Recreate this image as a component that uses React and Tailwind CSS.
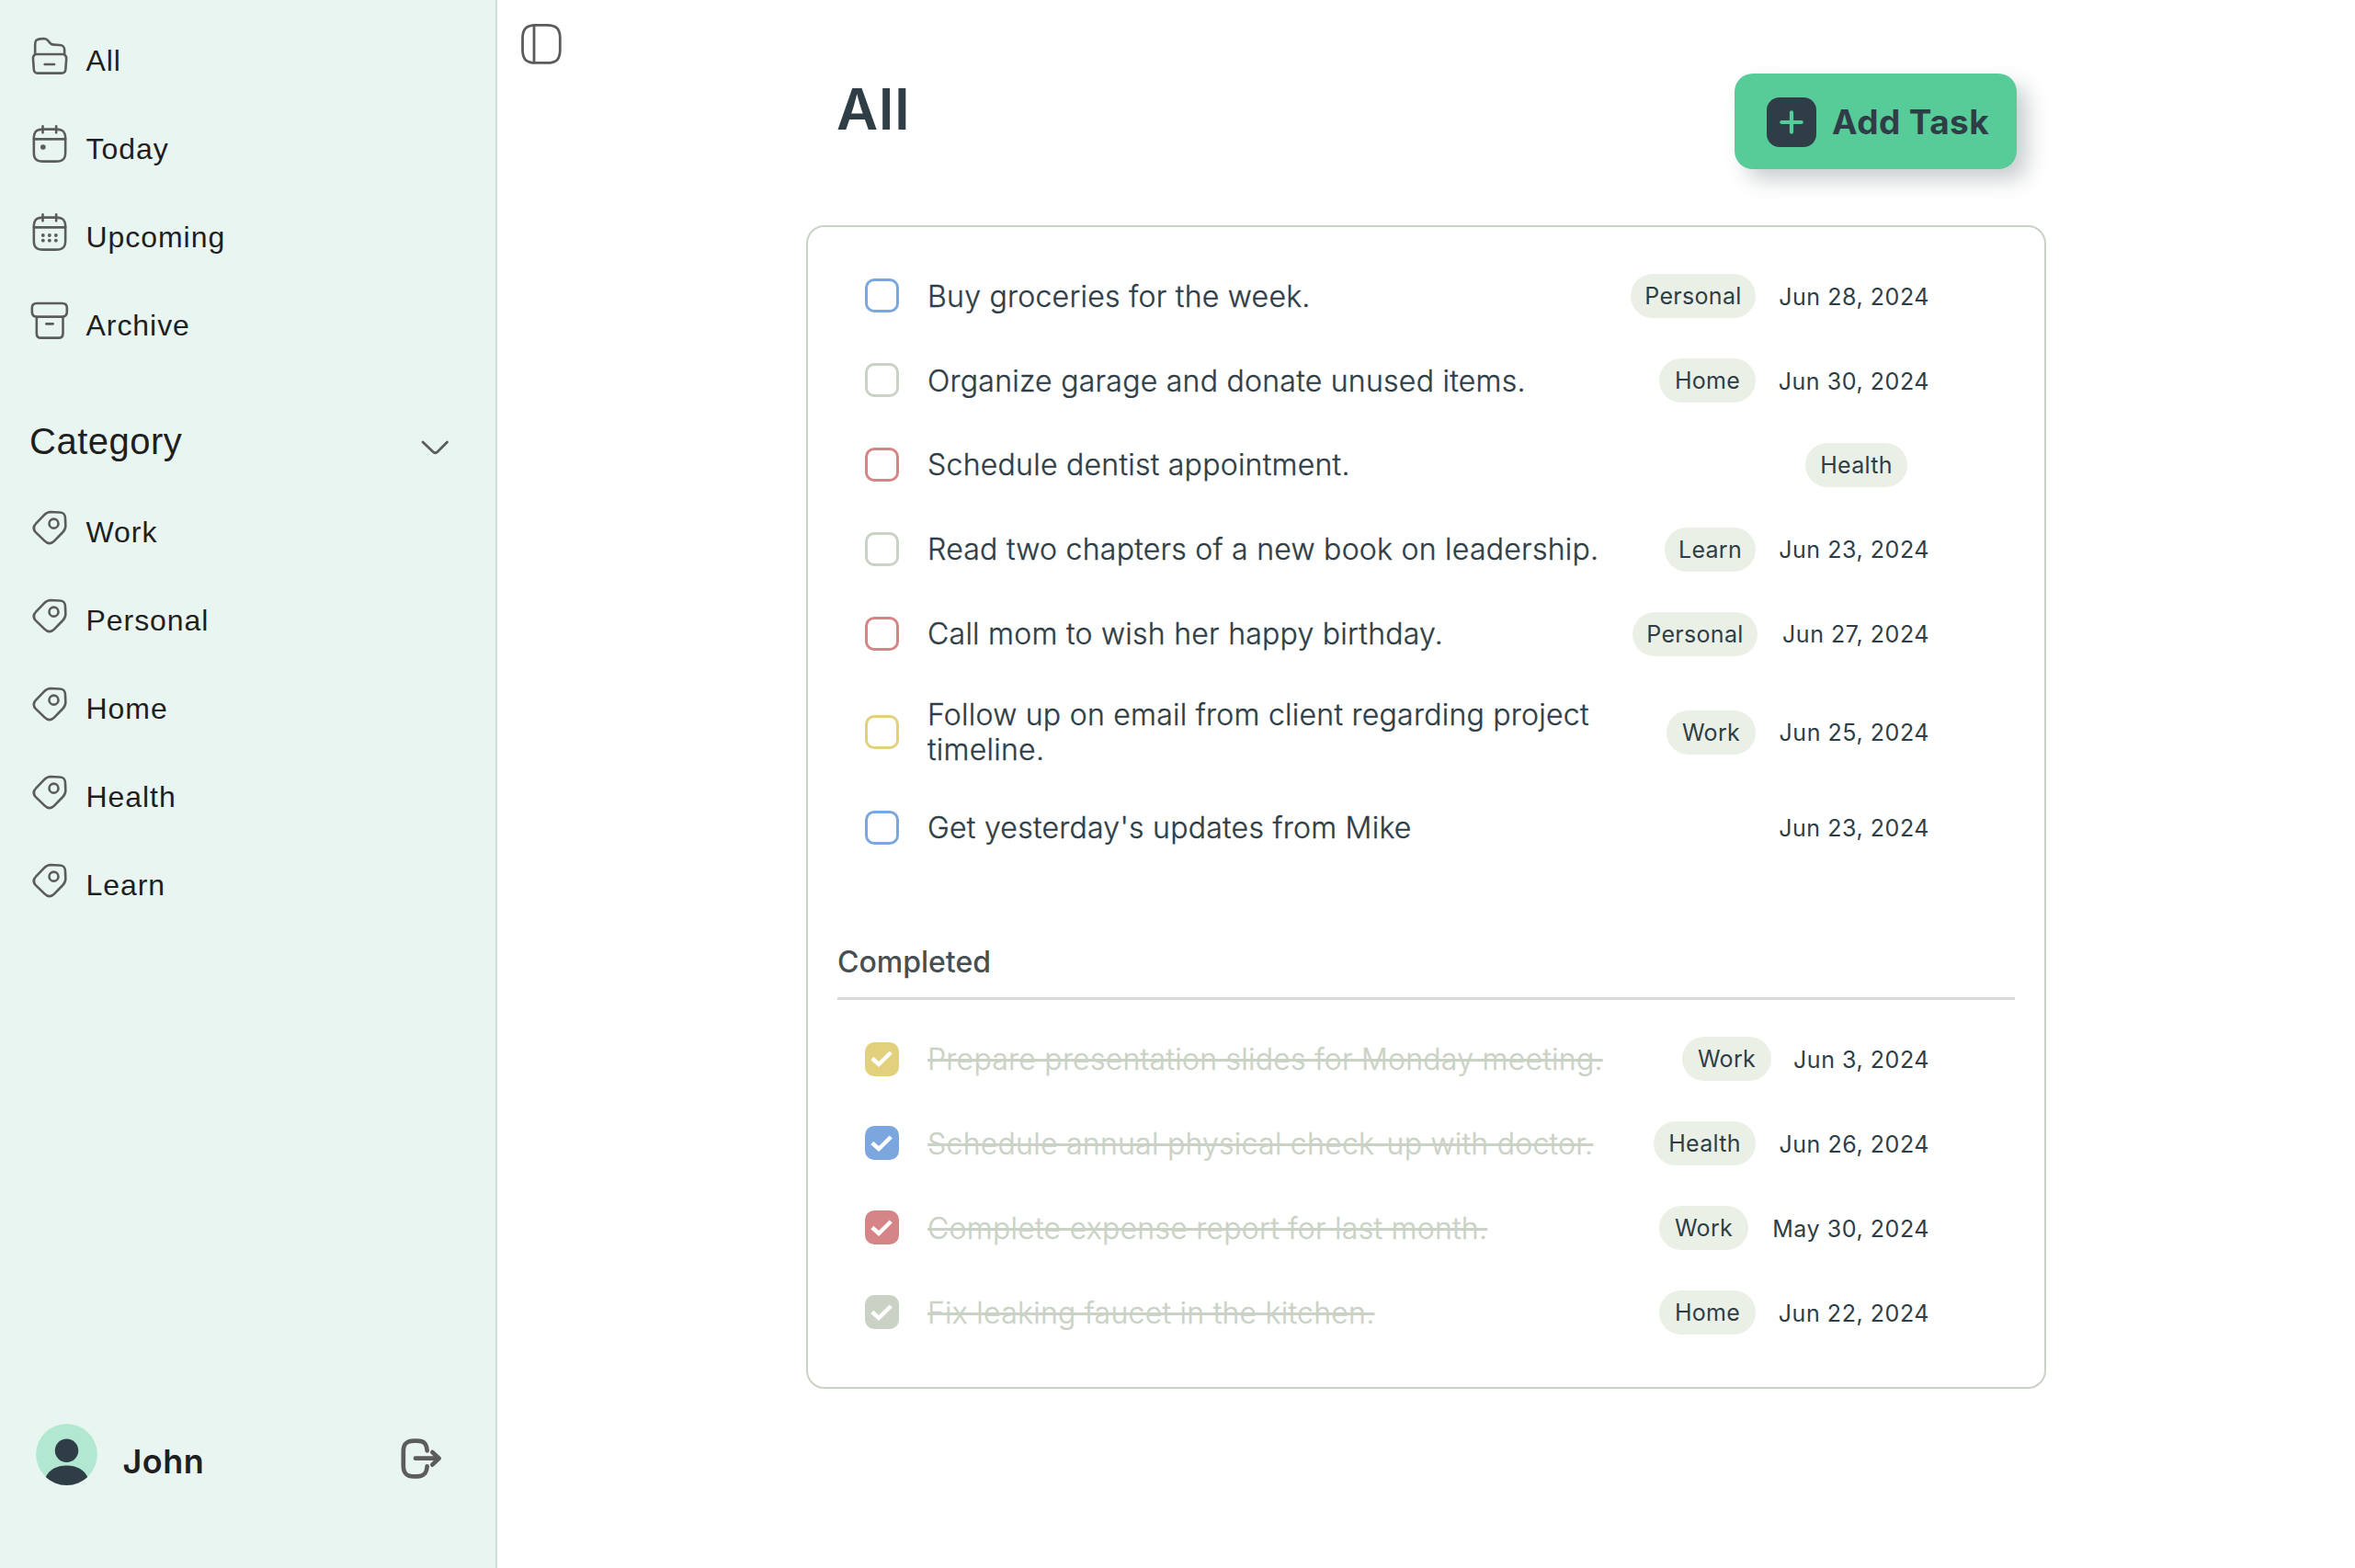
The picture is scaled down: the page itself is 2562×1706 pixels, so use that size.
const iconProps = {
  viewBox: "0 0 144 144",
  fill: "none",
  stroke: "#5c5c5c",
  strokeWidth: 7.8,
  strokeLinecap: "round",
  strokeLinejoin: "round",
};

const FolderIcon = () => (
  <svg {...iconProps} className="size-12 shrink-0">
    <path d="M24.5 66V34C24.5 21 29 17 40 16L54 15C61 15 64 18 68 23L72 28C76 34 79 35 86 35L104 36C116 37 119.5 41 120.5 51V66" />
    <path d="M30 66H114C122 66 127 72 126.500 82L124 116C123 125 119 128 111 128H33C25 128 21.500 125 20.500 116L18 82C17 72 22 66 30 66Z" />
    <path d="M56 99H87" />
  </svg>
);

const CalendarFrame = () => (
  <>
    <path d="M51 23H93C115 23 123.500 31 123.500 53V98C123.500 120 115 128 93 128H51C29 128 20.500 120 20.500 98V53C20.500 31 29 23 51 23Z" />
    <path d="M20.500 55H123.500M49.500 13V34M93.500 13V34" />
  </>
);

const TodayIcon = () => (
  <svg {...iconProps} className="size-12 shrink-0">
    <CalendarFrame />
    <circle cx="50.500" cy="81" r="8.500" fill="#5c5c5c" stroke="none" />
  </svg>
);

const UpcomingIcon = () => (
  <svg {...iconProps} className="size-12 shrink-0">
    <CalendarFrame />
    <g fill="#5c5c5c" stroke="none">
      {[81, 98].map((y) =>
        [50.5, 71.5, 92.5].map((x) => <circle key={`${x}-${y}`} cx={x} cy={y} r="5.8" />)
      )}
    </g>
  </svg>
);

const ArchiveIcon = () => (
  <svg {...iconProps} className="size-12 shrink-0">
    <path d="M30 15H113C124 15 128.500 20 128.500 30V43C128.500 54 124 59 113 59H30C19 59 14.500 54 14.500 43V30C14.500 20 19 15 30 15Z" />
    <path d="M29.500 60V113C29.500 124 34 128 44 128H101C111 128 115.500 124 115.500 113V60" />
    <path d="M61 82H83" />
  </svg>
);

const TagIcon = () => (
  <svg {...iconProps} className="size-12 shrink-0">
    <path d="M75 21L104 22.500C118 23 122.500 28 123 42L124 66C124 76 122 80 115 87L87 116C77 126 66 126 56 116L28 89C18 79 18 68 28 58L54 31C62 23 66 21 75 21Z" />
    <circle cx="85.500" cy="59" r="15" />
  </svg>
);

const LogoutIcon = () => (
  <svg {...iconProps} strokeWidth="14" className="size-12 shrink-0">
    <path d="M92 46C90 23 82 14 60 14H50C24 14 14.500 24 14.500 48V95C14.500 120 24 130 50 130H60C82 130 90 120 92 97" />
    <path d="M54 71H128M109 51L131 71L109 92" />
  </svg>
);

const SidebarIcon = () => (
  <svg viewBox="0 0 48 48" fill="none" stroke="#5c5c5c" strokeWidth="2.8" strokeLinecap="round" className="size-12">
    <path d="M18 3.400H30C40.500 3.400 44.300 7.400 44.300 18V30C44.300 40.600 40.500 44.400 30 44.400H18C7.500 44.400 3.500 40.600 3.500 30V18C3.500 7.400 7.500 3.400 18 3.400Z" />
    <path d="M16 3.600V44.200" />
  </svg>
);

const Avatar = () => (
  <svg viewBox="0 0 200 200" className="size-[67px] shrink-0">
    <clipPath id="avatar-clip">
      <circle cx="100" cy="100" r="100" />
    </clipPath>
    <g clipPath="url(#avatar-clip)">
      <circle cx="100" cy="100" r="100" fill="#b2e7d1" />
      <circle cx="100" cy="87" r="38" fill="#2f3e46" />
      <path d="M32 174C42 150 68 136 100 136S158 150 168 174V200H32Z" fill="#2f3e46" />
    </g>
  </svg>
);

const NavItem = ({ icon: Icon, label }) => (
  <a className="flex h-24 items-center pl-[30px]">
    <Icon />
    <span className="ml-[15.5px] pt-[9px] text-[32px] leading-none tracking-[0.95px]">{label}</span>
  </a>
);

const outline = {
  blue: "border-[#7ba6de]",
  gray: "border-[#cad2c5]",
  red: "border-[#d58585]",
  yellow: "border-[#e2d07c]",
};
const solid = {
  blue: "bg-[#7ba6de]",
  gray: "bg-[#cad2c5]",
  red: "bg-[#d58585]",
  yellow: "bg-[#e2d07c]",
};
const pillWidth = {
  Personal: "w-[136px]",
  Home: "w-[105px]",
  Health: "w-[111px]",
  Learn: "w-[99px]",
  Work: "w-[97px]",
};

const tasks = [
  { color: "blue", text: "Buy groceries for the week.", tag: "Personal", date: "Jun 28, 2024" },
  { color: "gray", text: "Organize garage and donate unused items.", tag: "Home", date: "Jun 30, 2024" },
  { color: "red", text: "Schedule dentist appointment.", tag: "Health" },
  { color: "gray", text: "Read two chapters of a new book on leadership.", tag: "Learn", date: "Jun 23, 2024" },
  { color: "red", text: "Call mom to wish her happy birthday.", tag: "Personal", date: "Jun 27, 2024", dateWidth: "w-[163px]" },
  { color: "yellow", text: "Follow up on email from client regarding project timeline.", tag: "Work", date: "Jun 25, 2024", tall: true },
  { color: "blue", text: "Get yesterday's updates from Mike", date: "Jun 23, 2024" },
];

const completed = [
  { color: "yellow", text: "Prepare presentation slides for Monday meeting.", tag: "Work", date: "Jun 3, 2024", dateWidth: "w-[148px]" },
  { color: "blue", text: "Schedule annual physical check-up with doctor.", tag: "Health", date: "Jun 26, 2024" },
  { color: "red", text: "Complete expense report for last month.", tag: "Work", date: "May 30, 2024", dateWidth: "w-[173px]" },
  { color: "gray", text: "Fix leaking faucet in the kitchen.", tag: "Home", date: "Jun 22, 2024" },
];

const Task = ({ task, done }) => (
  <li className={`flex items-center pl-[62px] pr-[125px] ${task.tall ? "h-[118.8px] pt-[3.6px]" : "h-[91.9px]"}`}>
    {done ? (
      <span className={`flex size-[37px] shrink-0 items-center justify-center rounded-[10px] ${solid[task.color]}`}>
        <svg viewBox="0 0 24 18" fill="none" stroke="#fff" strokeWidth="4.4" className="mr-[2px] h-[18px] w-6">
          <path d="M1.800 8.500L9 15L22.200 2" />
        </svg>
      </span>
    ) : (
      <span className={`size-[37px] shrink-0 rounded-[10px] border-3 ${outline[task.color]}`} />
    )}
    <span
      className={`ml-[31px] w-[742px] shrink-0 pt-[1.5px] text-[32px] leading-[38px] font-light tracking-[0.26px] [-webkit-text-stroke:0.35px] ${
        done ? "text-[#cad2c5] line-through decoration-[3px]" : ""
      }`}
    >
      {task.text}
    </span>
    <span className="ml-auto flex shrink-0 items-center gap-6 whitespace-nowrap text-[25px] tracking-[0.55px]">
      {task.tag && (
        <span className={`flex h-12 items-center justify-center rounded-full bg-[#ebf0e7] pt-[2px] tracking-[0.3px] ${pillWidth[task.tag]}`}>
          {task.tag}
        </span>
      )}
      <span className={`pt-[3px] text-right ${task.date ? task.dateWidth || "w-[165px]" : "w-0"}`}>{task.date}</span>
    </span>
  </li>
);

export default function App() {
  return (
    <div className="flex h-[1706px] w-[2562px] overflow-hidden bg-white font-['Inter',sans-serif] text-[#2f3e46]">
      <aside className="flex w-[541px] shrink-0 flex-col border-r-2 border-[#d0dedb] bg-[#e8f5f0] pt-[13px] text-[#1f1f1f]">
        <nav className="font-['Liberation_Sans',Arial,sans-serif]">
          <NavItem icon={FolderIcon} label="All" />
          <NavItem icon={TodayIcon} label="Today" />
          <NavItem icon={UpcomingIcon} label="Upcoming" />
          <NavItem icon={ArchiveIcon} label="Archive" />
          <div className="flex h-[129px] items-center justify-between pt-9 pl-8 pr-[48px]">
            <span className="text-[40px] leading-none tracking-[0.5px]">Category</span>
            <svg viewBox="0 0 36 20" fill="none" stroke="#5c5c5c" strokeWidth="2.8" strokeLinecap="round" strokeLinejoin="round" className="mt-[14px] h-5 w-9">
              <path d="M5 4L16 14.500C17.500 15.900 19.500 15.900 21 14.500L31.500 4" />
            </svg>
          </div>
          {["Work", "Personal", "Home", "Health", "Learn"].map((c) => (
            <NavItem key={c} icon={TagIcon} label={c} />
          ))}
        </nav>
        <div className="mt-auto mb-[90px] flex h-[67px] items-center pr-[57px] pl-[38.5px]">
          <Avatar />
          <span className="mt-[15px] ml-[28px] text-[36px] leading-none font-semibold tracking-[0.5px]">John</span>
          <span className="mt-[9px] ml-auto">
            <LogoutIcon />
          </span>
        </div>
      </aside>

      <main className="flex flex-1">
        <div className="w-[336px] shrink-0 pt-6 pl-[24px]">
          <SidebarIcon />
        </div>
        <div className="w-[1349px] shrink-0">
          <header className="flex h-[245px] items-start justify-between pt-20 pr-8 pl-[33px]">
            <h1 className="mt-[8px] text-[62px] leading-none font-semibold tracking-[0.9px]">All</h1>
            <button className="flex h-[104px] w-[307px] items-center rounded-[20px] bg-[#57cc99] pl-[35px] shadow-[12px_12px_22px_rgba(47,62,70,0.25)]">
              <span className="mt-[2px] flex size-[54px] shrink-0 items-center justify-center rounded-[14px] bg-[#2f3e46]">
                <svg viewBox="0 0 26 26" fill="none" stroke="#57cc99" strokeWidth="4.2" strokeLinecap="round" className="size-[26px]">
                  <path d="M13 2.300V23.700M2.300 13H23.700" />
                </svg>
              </span>
              <span className="mt-[1px] ml-[17px] text-[37px] leading-none font-bold tracking-[0.4px] whitespace-nowrap">Add Task</span>
            </button>
          </header>

          <section className="h-[1265.5px] rounded-[20px] border-2 border-[#cad2c5] pt-[29px]">
            <ul>
              {tasks.map((t) => (
                <Task key={t.text} task={t} />
              ))}
            </ul>
            <h2 className="mr-[32px] ml-[32px] flex h-[142px] items-end border-b-3 border-[#dadada] pb-[19px] text-[32px] leading-[38px] font-medium text-[#474f53]">
              Completed
            </h2>
            <ul className="pt-[18px]">
              {completed.map((t) => (
                <Task key={t.text} task={t} done />
              ))}
            </ul>
          </section>
        </div>
      </main>
    </div>
  );
}
